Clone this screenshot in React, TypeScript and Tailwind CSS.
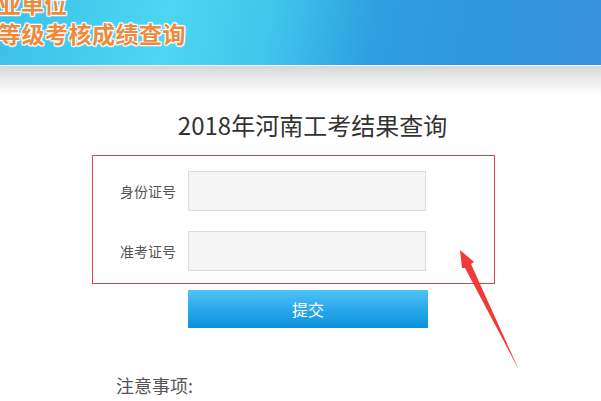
export default function App() {
  const cn = "font-['Microsoft_YaHei','Noto_Sans_CJK_SC',sans-serif]";
  return (
    <div className={`relative w-[601px] h-[401px] overflow-hidden bg-white ${cn}`}>
      {/* banner */}
      <div className="relative h-[65px] overflow-hidden bg-[linear-gradient(100deg,#3cc0ea_0%,#4cd6f1_28%,#3fc6ec_45%,#2e9fe0_62%,#2f97dd_80%,#3a93dc_100%)]">
        <div className="ml-[-2px] mt-[-12px] flex flex-col text-[23px] leading-[30px] font-bold text-[#ef8a3d] [text-shadow:0_0_2px_#fff,0_0_2px_#fff,1px_1px_1px_#fff,-1px_-1px_1px_#fff,1px_-1px_1px_#fff,-1px_1px_1px_#fff,0_1px_1px_#fff,0_-1px_1px_#fff]">
          <span>业单位</span>
          <span className="tracking-[0.5px]">等级考核成绩查询</span>
        </div>
      </div>
      <div className="h-px bg-white" />
      <div className="h-[30px] bg-[linear-gradient(180deg,#d6d6d6_0%,#ececec_45%,#ffffff_100%)]" />

      {/* title */}
      <div className="mt-[12px] flex justify-center pl-[24px] text-[24px] leading-[34px] text-[#333]">
        2018年河南工考结果查询
      </div>

      {/* form box */}
      <div className="ml-[92px] mt-[13px] w-[403px] h-[129px] border border-[#d9484a] flex flex-col gap-[20px] pt-[15px]">
        {["身份证号", "准考证号"].map((l) => (
          <div key={l} className="flex items-center h-[40px]">
            <span className="ml-[27px] w-[56px] text-[14px] text-[#555]">{l}</span>
            <div className="ml-[12px] w-[238px] h-[40px] border border-[#dcdcdc] bg-[#f5f5f5]" />
          </div>
        ))}
      </div>

      {/* button */}
      <div className="ml-[188px] mt-[6px] w-[240px] h-[38px] flex items-center justify-center bg-[linear-gradient(180deg,#4fc4f7_0%,#2aa8ea_50%,#0a92db_100%)] text-white text-[16px]">
        提交
      </div>

      <div className="ml-[116px] mt-[45px] text-[18px] leading-[24px] text-[#555]">注意事项:</div>

      {/* red arrow annotation */}
      <svg className="absolute left-0 top-0" width="601" height="401" viewBox="0 0 601 401">
        <polygon points="460,250 474,262 471,264 519,370 465,268 462,268" fill="#f03a3a" />
      </svg>
    </div>
  );
}
